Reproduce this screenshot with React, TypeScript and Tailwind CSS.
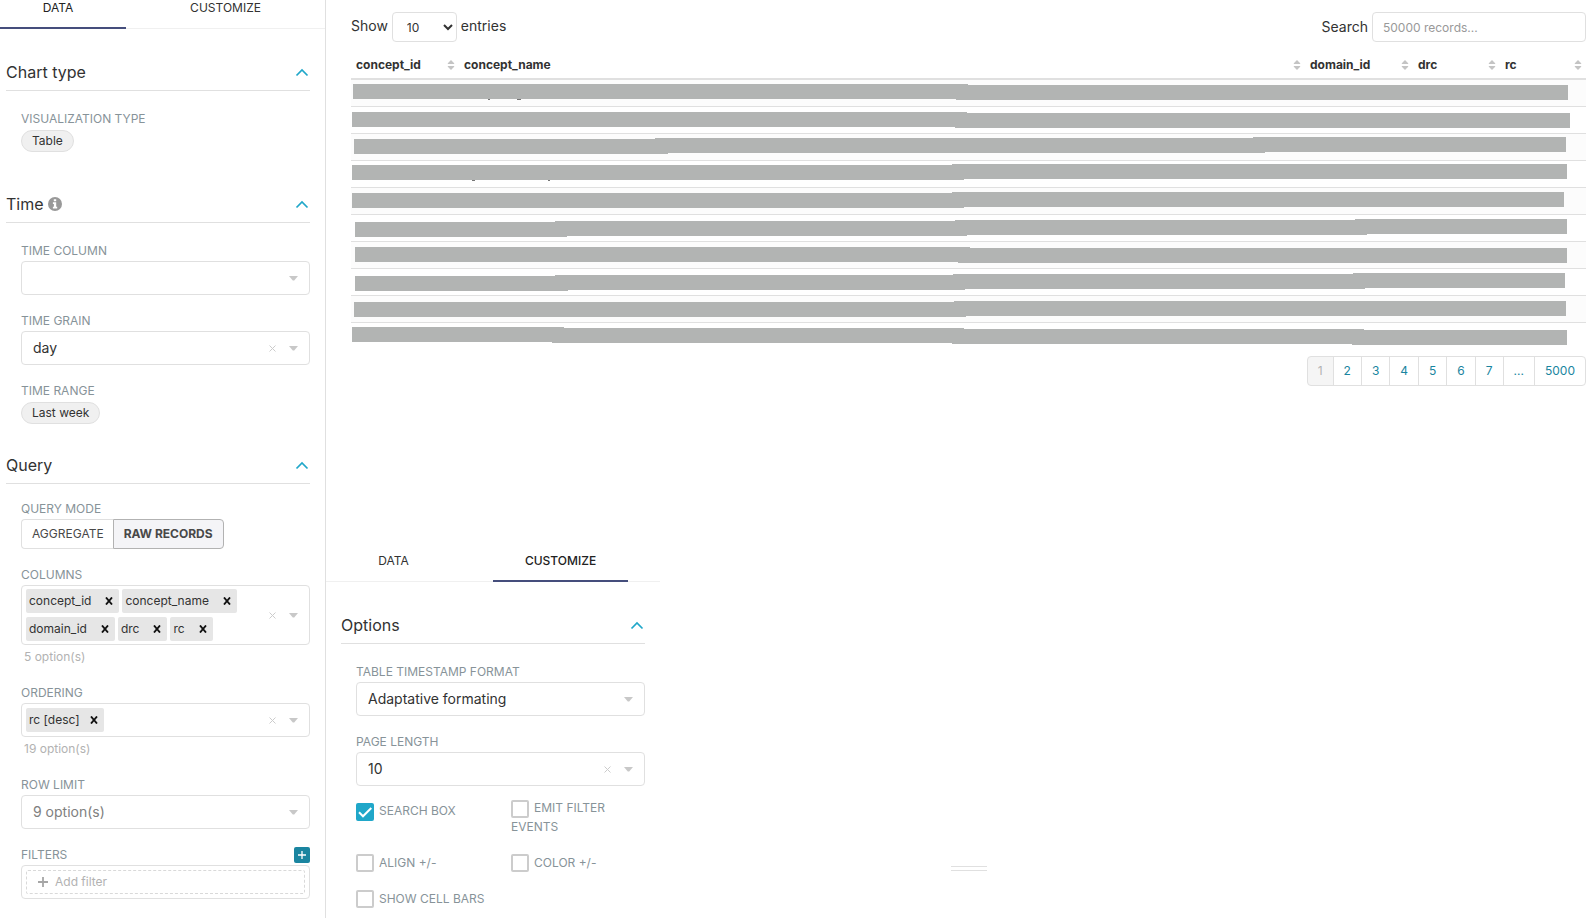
import React, { useId, useState } from "react";

const FIELD = "w-full rounded-[4px] border border-[#e0e0e0] bg-white";

function Chevron() {
  return (
    <svg width="14" height="9" viewBox="0 0 14 9" fill="none" stroke="#20a7c9" strokeWidth="1.7">
      <path d="M1.5 7.5 7 2l5.5 5.5" />
    </svg>
  );
}

function Caret() {
  return (
    <svg width="9" height="5" viewBox="0 0 9 5" fill="#c8c8c8">
      <path d="M0 0h9L5.2 4.5H3.8z" />
    </svg>
  );
}

function ClearIcon() {
  return (
    <svg width="7" height="7" viewBox="0 0 7 7" stroke="#cccccc" strokeWidth="1">
      <path d="M.5.5l6 6M6.5.5l-6 6" />
    </svg>
  );
}

function SortIcon() {
  return (
    <svg width="8" height="10" viewBox="0 0 8 10" fill="#c4c4c4">
      <path d="M4 0l3.2 3.2v.9H.8v-.9zM4 10L.8 6.8v-.9h6.4v.9z" />
    </svg>
  );
}

function Tabs({ active, cut = false }: { active: "DATA" | "CUSTOMIZE"; cut?: boolean }) {
  const on = "border-[#454e7c] font-medium text-[#222222]";
  const off = "border-transparent text-[#323232]";
  return (
    <div role="tablist" className="flex gap-8 border-b border-[#f0f0f0] text-xs">
      {(["DATA", "CUSTOMIZE"] as const).map((name) => (
        <button
          key={name}
          role="tab"
          aria-selected={name === active}
          className={`-mb-px border-b-2 pb-[11px] leading-4 ${name === active && !cut ? on : name === active ? "border-[#454e7c] text-[#222222]" : off} ${
            cut && name === "DATA" ? "w-[126px] pr-[10px]" : "w-[135px]"
          }`}
        >
          {name}
        </button>
      ))}
    </div>
  );
}

function Section({
  title,
  info = false,
  className,
  children,
}: {
  title: string;
  info?: boolean;
  className: string;
  children: React.ReactNode;
}) {
  return (
    <section className={className}>
      <h2 className="border-b border-[#e0e0e0]">
        <button className="flex h-9 w-full items-center justify-between pr-px text-base">
          <span className="flex items-center gap-1">
            {title}
            {info && (
              <svg width="14" height="14" viewBox="0 0 14 14">
                <circle cx="7" cy="7" r="7" fill="#999999" />
                <path d="M5.8 2.2h2.4v2H5.8zM4.9 5.2h3.3v4.6h1v1.7H4.9V9.8h1V6.9h-1z" fill="#ffffff" />
              </svg>
            )}
          </span>
          <Chevron />
        </button>
      </h2>
      {children}
    </section>
  );
}

function Label({ htmlFor, children }: { htmlFor?: string; children: React.ReactNode }) {
  return (
    <label htmlFor={htmlFor} className="block text-xs leading-5 text-[#879399]">
      {children}
    </label>
  );
}

function Picker({
  label,
  value,
  clearable = false,
  muted = false,
}: {
  label: string;
  value: string;
  clearable?: boolean;
  muted?: boolean;
}) {
  const id = useId();
  return (
    <div>
      <Label htmlFor={id}>{label}</Label>
      <div className="relative">
        <select id={id} className={`${FIELD} h-[34px] appearance-none pl-[11px] text-sm ${muted ? "text-[#808080]" : "text-[#323232]"}`}>
          <option>{value}</option>
        </select>
        <span className="pointer-events-none absolute inset-y-0 right-3 flex items-center gap-[13px]">
          {clearable && <ClearIcon />}
          <Caret />
        </span>
      </div>
    </div>
  );
}

function ChipPicker({ label, chips, hint, tight = false }: { label: string; chips: string[]; hint: string; tight?: boolean }) {
  const id = useId();
  return (
    <div>
      <Label htmlFor={id}>{label}</Label>
      <div className={`${FIELD} flex min-h-[34px] items-center py-[3px] pr-[11px] pl-1`}>
        <div className="flex min-w-0 flex-1 flex-wrap gap-x-[3px] gap-y-1">
          {chips.map((chip) => (
            <span key={chip} className="flex h-6 items-center rounded-[2px] bg-[#e6e6e6] pr-[6px] pl-[3px] text-xs">
              {chip}
              <button aria-label={`Remove ${chip}`} className={tight ? "ml-[10px]" : "ml-[14px]"}>
                <svg width="8" height="8" viewBox="0 0 8 8" stroke="#111111" strokeWidth="1.9">
                  <path d="M1 .5l6 7M7 .5l-6 7" />
                </svg>
              </button>
            </span>
          ))}
          <input id={id} className="h-6 w-2 flex-1 text-sm outline-none" />
        </div>
        <button aria-label={`Clear ${label.toLowerCase()}`} className="mr-[13px]">
          <ClearIcon />
        </button>
        <Caret />
      </div>
      <p className="pt-0.5 pl-[3px] text-xs leading-5 text-[#b2b2b2]">{hint}</p>
    </div>
  );
}

function PillField({ label, value }: { label: string; value: string }) {
  const id = useId();
  return (
    <div>
      <Label htmlFor={id}>{label}</Label>
      <button id={id} className="mt-px block h-[22px] rounded-full border border-[#e0e0e0] bg-[#f0f0f0] px-[10px] text-xs">
        {value}
      </button>
    </div>
  );
}

function Check({ label, initial = false, wrap = false }: { label: string; initial?: boolean; wrap?: boolean }) {
  const [checked, setChecked] = useState(initial);
  return (
    <label className={`block text-xs text-[#879399] ${wrap ? "leading-[18px]" : "leading-6"}`}>
      <span className="relative mr-[5px] inline-block size-[18px] align-middle">
        <input
          type="checkbox"
          checked={checked}
          onChange={() => setChecked(!checked)}
          className="block size-[18px] appearance-none rounded-[2px] border-2 border-[#cccccc] bg-white checked:border-[#20a7c9] checked:bg-[#20a7c9]"
        />
        {checked && (
          <svg className="pointer-events-none absolute inset-0" width="18" height="18" viewBox="0 0 18 18" fill="none" stroke="#ffffff" strokeWidth="2">
            <path d="M3 9.3l4 4L15.3 5" />
          </svg>
        )}
      </span>
      {label}
    </label>
  );
}

const columns = [
  { name: "concept_id", width: "w-[108px]" },
  { name: "concept_name", width: "" },
  { name: "domain_id", width: "w-[108px]" },
  { name: "drc", width: "w-[87px]" },
  { name: "rc", width: "w-[86px]" },
];

// Marker strokes covering each record: [start, end, top] in row units.
const rows: { strokes: number[][]; specks?: number[][] }[] = [
  { strokes: [[2, 617, 4], [605, 1217, 5]], specks: [[137, 2], [166, 4]] },
  { strokes: [[1, 616, 5], [604, 1219, 6]] },
  { strokes: [[3, 317, 5], [304, 914, 4], [902, 1215, 3]] },
  { strokes: [[1, 613, 4], [601, 1216, 3]], specks: [[121, 3], [197, 2]] },
  { strokes: [[1, 613, 5], [601, 1213, 4]] },
  { strokes: [[4, 216, 7], [204, 616, 6], [604, 1016, 5], [1004, 1216, 4]] },
  { strokes: [[4, 619, 5], [607, 1216, 6]] },
  { strokes: [[4, 217, 7], [204, 614, 6], [602, 1014, 5], [1002, 1214, 4]] },
  { strokes: [[3, 615, 6], [603, 1215, 5]] },
  { strokes: [[1, 213, 4], [201, 613, 5], [601, 1013, 6], [1001, 1216, 7]] },
];

function DataTable() {
  return (
    <table className="w-full table-fixed border-separate border-spacing-0">
      <thead>
        <tr>
          {columns.map((c) => (
            <th key={c.name} className={`h-[31px] border-b-2 border-[#e0e0e0] pt-[3px] pr-1 pb-0 pl-[5px] text-left text-xs font-bold ${c.width}`}>
              <span className="flex items-center justify-between">
                {c.name}
                <SortIcon />
              </span>
            </th>
          ))}
        </tr>
      </thead>
      <tbody>
        {rows.map((row, i) => (
          <tr key={i} className="odd:bg-[#fcfcfc]">
            <td colSpan={5} className={`p-0 ${i < rows.length - 1 ? "border-b border-[#e0e0e0]" : ""}`}>
              <svg className="block h-[26px] w-full" viewBox="0 0 1235 26" preserveAspectRatio="none" shapeRendering="crispEdges">
                {row.specks?.map(([x, w]) => (
                  <rect key={x} x={x} y={19} width={w} height={1} fill="#777777" />
                ))}
                {row.strokes.map(([a, b, y]) => (
                  <rect key={a} x={a} y={y} width={b - a} height={15} fill="#b2b4b3" />
                ))}
              </svg>
            </td>
          </tr>
        ))}
      </tbody>
    </table>
  );
}

const pages = ["1", "2", "3", "4", "5", "6", "7", "...", "5000"];

export default function App() {
  return (
    <div className="flex min-h-screen bg-white font-['Inter',sans-serif] text-[#323232]">
      <aside className="w-[326px] shrink-0 border-r border-[#e0e0e0]">
        <Tabs active="DATA" cut />
        <div className="pr-[15px] pl-[6px]">
          <Section title="Chart type" className="pt-[25px]">
            <div className="pt-[18px] pl-[15px]">
              <PillField label="VISUALIZATION TYPE" value="Table" />
            </div>
          </Section>
          <Section title="Time" info className="pt-[34px]">
            <div className="flex flex-col gap-4 pt-[18px] pl-[15px]">
              <Picker label="TIME COLUMN" value="" />
              <Picker label="TIME GRAIN" value="day" clearable />
              <PillField label="TIME RANGE" value="Last week" />
            </div>
          </Section>
          <Section title="Query" className="pt-[23px]">
            <div className="flex flex-col gap-4 pt-[15px] pl-[15px]">
              <div role="group" aria-label="Query mode">
                <Label>QUERY MODE</Label>
                <div className="flex h-[30px] text-xs">
                  <button className="rounded-l-[4px] border border-r-0 border-[#e0e0e0] pr-[9px] pl-[10px] text-[#484848]">AGGREGATE</button>
                  <button aria-pressed="true" className="rounded-r-[4px] border border-[#b2b2b2] bg-[#f4f4f7] px-[10px] font-bold text-[#484848]">
                    RAW RECORDS
                  </button>
                </div>
              </div>
              <ChipPicker label="COLUMNS" chips={["concept_id", "concept_name", "domain_id", "drc", "rc"]} hint="5 option(s)" />
              <ChipPicker label="ORDERING" chips={["rc [desc]"]} hint="19 option(s)" tight />
              <Picker label="ROW LIMIT" value="9 option(s)" muted />
              <div>
                <div className="flex items-center justify-between">
                  <Label>FILTERS</Label>
                  <button aria-label="Add" className="flex size-4 items-center justify-center rounded-[2px] bg-[#1a85a0]">
                    <svg width="8" height="8" viewBox="0 0 8 8" stroke="#ffffff" strokeWidth="1.3">
                      <path d="M4 0v8M0 4h8" />
                    </svg>
                  </button>
                </div>
                <div className={`${FIELD} h-[34px] p-1`}>
                  <button className="flex h-6 w-full items-center gap-[7px] rounded-[2px] border border-dashed border-[#d9d9d9] pl-[11px] text-xs text-[#b2b2b2]">
                    <svg width="10" height="10" viewBox="0 0 10 10" stroke="#a6a6a6" strokeWidth="1.8">
                      <path d="M5 0v10M0 5h10" />
                    </svg>
                    Add filter
                  </button>
                </div>
              </div>
            </div>
          </Section>
        </div>
      </aside>

      <main className="min-w-0 flex-1">
        <div className="pr-2 pl-[25px]">
          <div className="flex items-start justify-between pt-3 pb-[7px] text-sm">
            <label className="flex items-center gap-1">
              <span className="pb-0.5">Show</span>
              <select className="h-[30px] w-[65px] rounded-[4px] border border-[#e0e0e0] bg-white px-[10px] text-xs">
                <option>10</option>
              </select>
              <span className="pb-0.5">entries</span>
            </label>
            <label className="flex items-center gap-1">
              Search
              <input
                type="text"
                placeholder="50000 records..."
                className="h-[30px] w-[214px] rounded-[4px] border border-[#e0e0e0] px-[10px] text-xs placeholder:text-[#999999]"
              />
            </label>
          </div>
          <DataTable />
          <nav aria-label="Pages" className="mt-[7px] flex justify-end text-xs">
            {pages.map((p, i) => (
              <a
                key={p}
                href="#"
                className={`-ml-px flex h-[30px] items-center border border-[#e0e0e0] px-[10px] first:rounded-l-[4px] last:rounded-r-[4px] ${
                  i === 0 ? "bg-[#f5f5f5] text-[#b2b2b2]" : "text-[#1a85a0]"
                }`}
              >
                {p}
              </a>
            ))}
          </nav>
        </div>

        <div className="grid grid-cols-[1fr_36px_1fr] pt-[167px] pr-2 pl-[25px]">
          <div className="-ml-[25px] w-[334px] pb-1">
            <Tabs active="CUSTOMIZE" />
            <div className="px-[15px]">
              <Section title="Options" className="pt-[25px]">
                <div className="flex flex-col gap-4 pt-[18px] pl-[15px]">
                  <Picker label="TABLE TIMESTAMP FORMAT" value="Adaptative formating" />
                  <Picker label="PAGE LENGTH" value="10" clearable />
                </div>
                <div className="grid grid-cols-[155px_1fr] gap-y-3 pt-[13px] pl-[15px]">
                  <Check label="SEARCH BOX" initial />
                  <div className="pb-[3px]">
                    <Check label="EMIT FILTER EVENTS" wrap />
                  </div>
                  <Check label="ALIGN +/-" />
                  <Check label="COLOR +/-" />
                  <Check label="SHOW CELL BARS" />
                </div>
              </Section>
            </div>
          </div>
          <div className="mb-[44px] h-[5px] self-end border-y border-[#e0e0e0]" />
        </div>
      </main>
    </div>
  );
}
